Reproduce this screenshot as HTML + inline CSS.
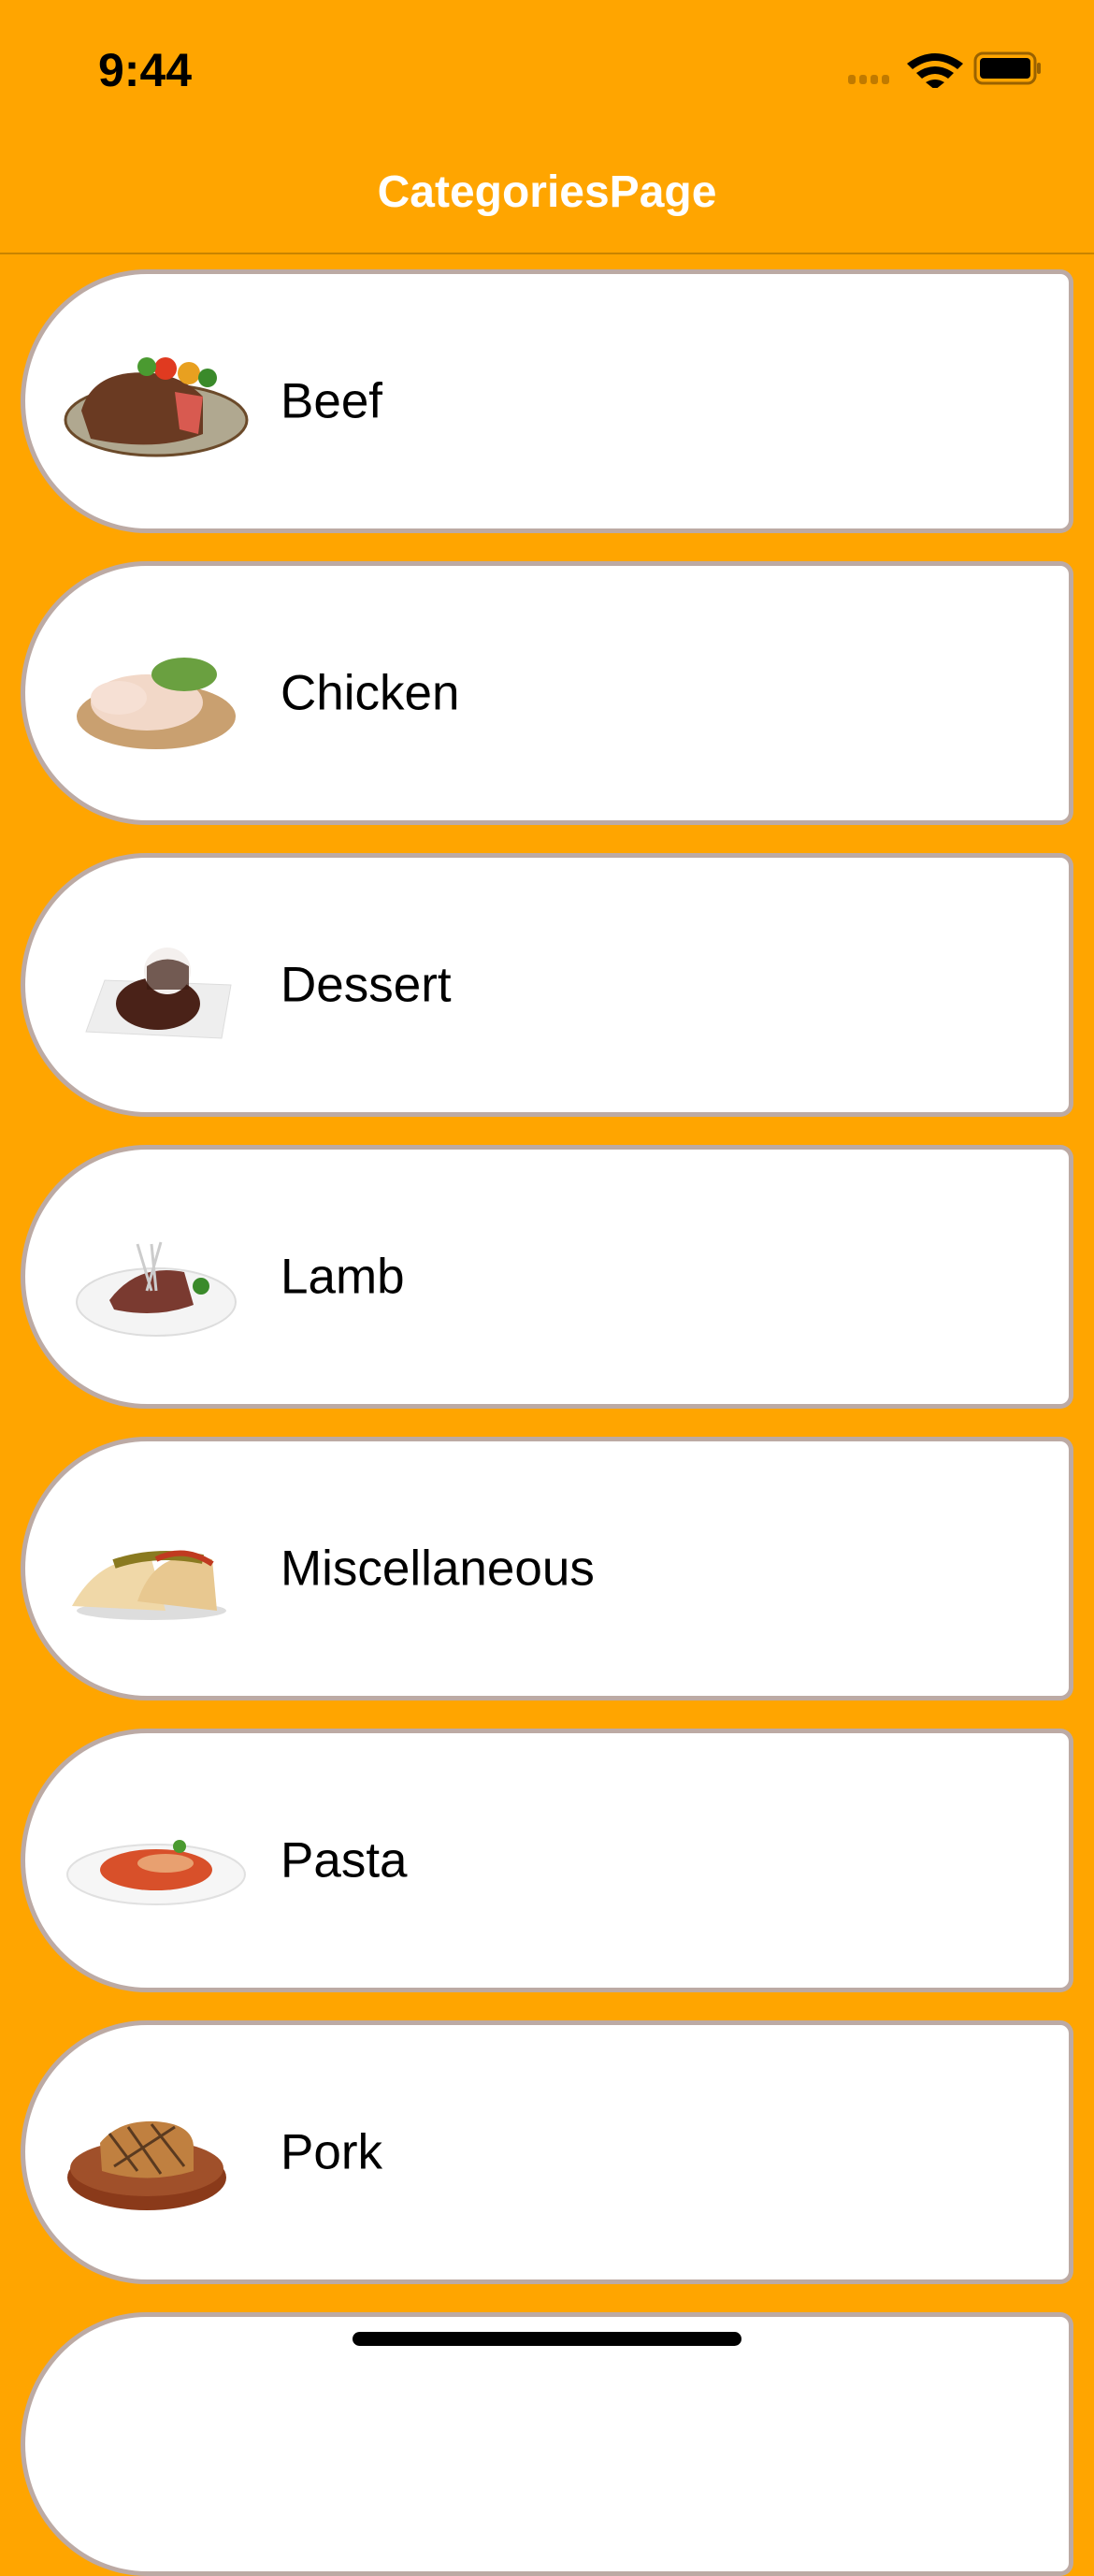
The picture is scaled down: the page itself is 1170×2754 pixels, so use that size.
<!DOCTYPE html>
<html><head><meta charset="utf-8"><style>
*{margin:0;padding:0;box-sizing:border-box}
body{width:1170px;height:2532px;background:#FFA500;position:relative;overflow:hidden;font-family:"Liberation Sans",sans-serif}
.time{position:absolute;left:105px;top:46px;font-size:50px;font-weight:bold;color:#000}
.title{position:absolute;left:0;width:1170px;top:178px;text-align:center;font-size:48px;font-weight:bold;color:#fff}
.line{position:absolute;left:0;top:270px;width:1170px;height:2px;background:#c88400}
.card{position:absolute;left:22px;width:1126px;height:282px;background:#fff;border:5px solid #bcaaa4;border-radius:135px 14px 14px 135px/141px 14px 14px 141px}
.card span{position:absolute;left:273px;top:50%;transform:translateY(-50%);font-size:53px;color:#000}
.card svg{position:absolute;left:40px;top:71px}
.home{position:absolute;left:377px;top:2493px;width:416px;height:15px;background:#000;border-radius:8px}
</style></head><body>
<div class="time">9:44</div>
<svg style="position:absolute;left:905px;top:54px" width="210" height="40">
<g fill="#c07a00"><rect x="2" y="26" width="8" height="10" rx="3"/><rect x="14" y="26" width="8" height="10" rx="3"/><rect x="26" y="26" width="8" height="10" rx="3"/><rect x="38" y="26" width="8" height="10" rx="3"/></g>
<path d="M65 14 Q95 -8 125 14 L119 20 Q95 2 71 20Z M75 24 Q95 10 115 24 L109 30 Q95 20 81 30Z M85 34 Q95 28 105 34 L95 42Z" fill="#000"/>
<rect x="138" y="3" width="64" height="32" rx="8" fill="none" stroke="#9a6200" stroke-width="3"/>
<rect x="143" y="8" width="54" height="22" rx="4" fill="#000"/>
<rect x="204" y="13" width="4" height="12" rx="2" fill="#9a6200"/>
</svg>
<div class="title">CategoriesPage</div>
<div class="line"></div>

<div class="card" style="top:288px"><svg width="200" height="130"><ellipse cx="100" cy="85" rx="97" ry="38" fill="#b0a890" stroke="#6b4a2a" stroke-width="3"/><path d="M20 75 Q30 40 70 35 Q120 30 150 60 L150 100 Q100 120 30 105Z" fill="#6a3a22"/><path d="M120 55 L150 60 L145 100 L125 95Z" fill="#d85a50"/><circle cx="110" cy="30" r="12" fill="#e03a20"/><circle cx="135" cy="35" r="12" fill="#e8a020"/><circle cx="155" cy="40" r="10" fill="#3a8a2a"/><circle cx="90" cy="28" r="10" fill="#4a9a30"/></svg><span>Beef</span></div>

<div class="card" style="top:600px"><svg width="200" height="130"><ellipse cx="100" cy="90" rx="85" ry="35" fill="#c9a070"/><ellipse cx="90" cy="75" rx="60" ry="30" fill="#f2d8c8"/><ellipse cx="130" cy="45" rx="35" ry="18" fill="#6aa040"/><ellipse cx="60" cy="70" rx="30" ry="18" fill="#f6e0d4"/></svg><span>Chicken</span></div>

<div class="card" style="top:912px"><svg width="200" height="130"><path d="M25 115 L45 60 L180 65 L170 122Z" fill="#eee" stroke="#ddd"/><ellipse cx="102" cy="85" rx="45" ry="28" fill="#4a2218"/><ellipse cx="112" cy="50" rx="25" ry="25" fill="#f4f0ee"/><path d="M90 45 Q112 30 135 45 L135 70 L90 70Z" fill="#3a1a10" opacity=".7"/></svg><span>Dessert</span></div>

<div class="card" style="top:1224px"><svg width="200" height="130"><ellipse cx="100" cy="92" rx="85" ry="36" fill="#f4f4f4" stroke="#ddd" stroke-width="2"/><path d="M50 90 Q80 50 130 60 L140 95 Q100 110 55 100Z" fill="#7a3a30"/><path d="M80 30 L95 80 M95 30 L100 80 M105 28 L90 80" stroke="#ccc" stroke-width="3"/><circle cx="148" cy="75" r="9" fill="#3a8a2a"/></svg><span>Lamb</span></div>

<div class="card" style="top:1536px"><svg width="200" height="130"><ellipse cx="95" cy="110" rx="80" ry="10" fill="#ddd"/><path d="M10 105 Q40 50 95 55 L110 110Z" fill="#f0d8a8"/><path d="M80 100 Q100 40 160 55 L165 110Z" fill="#e8c890"/><path d="M55 60 Q100 45 150 55" stroke="#8a7a20" stroke-width="10" fill="none"/><path d="M100 55 Q130 40 160 60" stroke="#c03a20" stroke-width="6" fill="none"/></svg><span>Miscellaneous</span></div>

<div class="card" style="top:1848px"><svg width="200" height="130"><ellipse cx="100" cy="80" rx="95" ry="32" fill="#f6f6f6" stroke="#e0e0e0" stroke-width="2"/><ellipse cx="100" cy="75" rx="60" ry="22" fill="#d8502a"/><ellipse cx="110" cy="68" rx="30" ry="10" fill="#e8a070"/><circle cx="125" cy="50" r="7" fill="#4a9a30"/></svg><span>Pasta</span></div>

<div class="card" style="top:2160px"><svg width="200" height="130"><ellipse cx="90" cy="92" rx="85" ry="35" fill="#8a3a1a"/><ellipse cx="90" cy="82" rx="82" ry="30" fill="#a0502a"/><path d="M40 55 Q60 30 100 32 Q140 35 140 60 L140 85 Q90 100 42 85Z" fill="#c08040"/><path d="M50 45 L80 85 M70 38 L105 88 M95 35 L130 80 M55 80 L120 38" stroke="#5a3a20" stroke-width="3"/></svg><span>Pork</span></div>

<div class="card" style="top:2472px"></div>
<div class="home"></div>
</body></html>
